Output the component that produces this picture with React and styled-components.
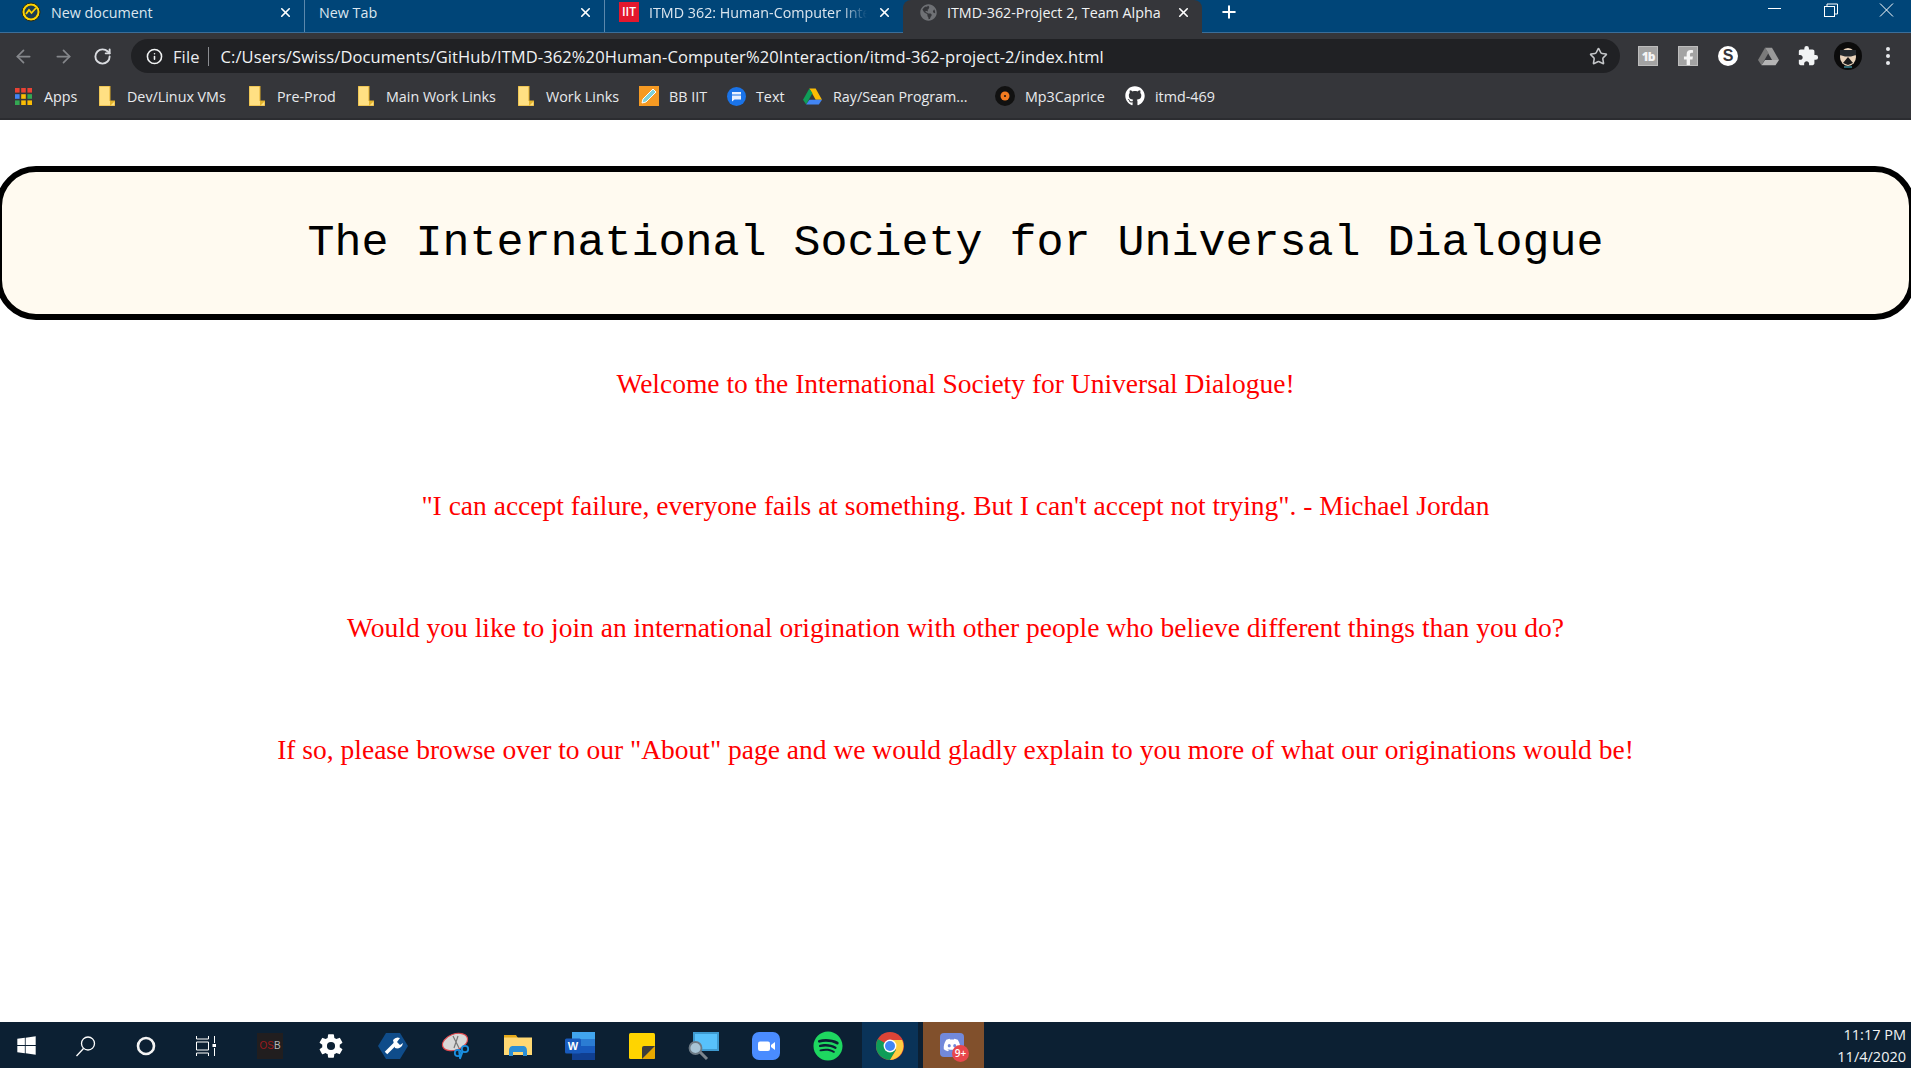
import React from "react";
import styled, { createGlobalStyle } from "styled-components";
import { ArrowLeft, ArrowRight, RotateCw, Star, Info, Plus, X } from "lucide-react";
import { FaGithub, FaSpotify, FaDiscord, FaFacebookF, FaGlobeAmericas, FaWindows } from "react-icons/fa";
import { MdExtension } from "react-icons/md";
import { IoSettingsSharp } from "react-icons/io5";

const GlobalStyle = createGlobalStyle`
  html, body {
    margin: 0;
    padding: 0;
    overflow: hidden;
    background: #fff;
  }
`;

const Page = styled.div`
  display: flex;
  flex-direction: column;
  width: 1911px;
  height: 1068px;
  overflow: hidden;
  font-family: "Open Sans", "Noto Sans", sans-serif;
`;

const TabBar = styled.div`
  display: flex;
  align-items: flex-end;
  height: 33px;
  background: #004578;
  border-bottom: 1px solid #3b6e99;
  box-sizing: border-box;
  padding-left: 5px;
  flex-shrink: 0;
`;

const Tab = styled.div`
  display: flex;
  align-items: center;
  width: ${(p) => p.$w}px;
  height: 33px;
  flex-shrink: 0;
  box-sizing: border-box;
  padding: 0 11px ${(p) => (p.$active ? 8 : 7)}px 16px;
  gap: 10px;
  color: #e6edf3;
  font-size: 14.3px;
  position: relative;
  background: ${(p) => (p.$active ? "#35363a" : "transparent")};
  border-radius: ${(p) => (p.$active ? "8px 8px 0 0" : "0")};
  margin-bottom: ${(p) => (p.$active ? "-1px" : "0")};
  border-right: ${(p) => (p.$sep ? "1px solid #5c88ac" : "none")};
  padding-left: ${(p) => p.$left || 16}px;
`;

const TabTitle = styled.span`
  flex: 1;
  white-space: nowrap;
  overflow: hidden;
  color: ${(p) => (p.$active ? "#f1f3f4" : "#dbe6ef")};
  ${(p) =>
    p.$fade &&
    "-webkit-mask-image: linear-gradient(to right, #000 88%, transparent 100%);"}
`;

const TabClose = styled(X)`
  width: 15px;
  height: 15px;
  color: #fff;
  flex-shrink: 0;
  stroke-width: 2.6;
`;

const NewTab = styled.div`
  display: flex;
  align-items: center;
  padding: 0 0 7px 17px;
  height: 33px;
  box-sizing: border-box;
  color: #fff;
`;

const WindowControls = styled.div`
  margin-left: auto;
  display: flex;
  height: 33px;
  padding-right: 15px;
  gap: 38px;
  color: #fff;
  align-items: flex-start;
  padding-top: 3px;
  box-sizing: border-box;
`;

const Toolbar = styled.div`
  display: flex;
  align-items: center;
  height: 46px;
  background: #35363a;
  padding: 0 0 0 13px;
  box-sizing: border-box;
  flex-shrink: 0;
`;

const NavButton = styled.div`
  width: 40px;
  flex-shrink: 0;
  display: flex;
  color: ${(p) => (p.$off ? "#85878b" : "#dadce0")};
`;

const AddressBar = styled.div`
  display: flex;
  align-items: center;
  width: 1489px;
  height: 34px;
  margin-left: -2px;
  background: #202124;
  border-radius: 17px;
  box-sizing: border-box;
  padding: 0 12px 0 15px;
  color: #f1f3f4;
  font-size: 16.5px;
  letter-spacing: 0.1px;
  flex-shrink: 0;
`;

const Scheme = styled.span`
  margin-left: 10px;
  padding-right: 8px;
  border-right: 1px solid #8b8d91;
  line-height: 19px;
  color: #e8eaed;
`;

const Url = styled.span`
  margin-left: 12px;
  flex: 1;
  white-space: nowrap;
`;

const ExtensionRow = styled.div`
  display: flex;
  align-items: center;
  margin-left: 8px;
`;

const ExtensionSlot = styled.div`
  width: 40px;
  height: 34px;
  display: flex;
  align-items: center;
  justify-content: center;
`;

const SquareExt = styled.div`
  width: 20px;
  height: 20px;
  background: #a3a3a3;
  border: 1px solid #bcbcbc;
  box-sizing: border-box;
  display: flex;
  align-items: center;
  justify-content: center;
  color: #f4f4f4;
  font-size: 12px;
  font-weight: 800;
  letter-spacing: -1px;
  overflow: hidden;
`;

const RoundExt = styled.div`
  width: 20px;
  height: 20px;
  border-radius: 50%;
  background: #fff;
  color: #35363a;
  font-family: "Liberation Sans", sans-serif;
  font-size: 16px;
  font-weight: 700;
  line-height: 20px;
  text-align: center;
`;

const Dots = styled.div`
  display: flex;
  flex-direction: column;
  gap: 3px;

  i {
    display: block;
    width: 4px;
    height: 4px;
    border-radius: 50%;
    background: #e8eaed;
  }
`;

const BookmarksBar = styled.div`
  display: flex;
  align-items: center;
  height: 41px;
  background: #35363a;
  border-bottom: 2px solid #2b2c30;
  box-sizing: border-box;
  padding: 0 0 5px 15px;
  flex-shrink: 0;
`;

const Bookmark = styled.div`
  display: flex;
  align-items: center;
  width: ${(p) => p.$w}px;
  flex-shrink: 0;
  gap: ${(p) => p.$gap || 12}px;
  color: #e8eaed;
  font-size: 14.3px;
  white-space: nowrap;
`;

const Folder = styled.svg`
  width: 16px;
  height: 20px;
  flex-shrink: 0;
`;

const Content = styled.main`
  flex: 1;
  min-height: 0;
  background: #fff;
  display: flex;
  flex-direction: column;
  align-items: center;
`;

const Banner = styled.h1`
  align-self: stretch;
  margin: 46px -4px 0;
  height: 154px;
  box-sizing: border-box;
  border: 6px solid #000;
  border-radius: 40px;
  background: floralwhite;
  display: flex;
  align-items: center;
  justify-content: center;
  font-family: "Liberation Mono", "Courier New", monospace;
  font-size: 45px;
  font-weight: 400;
  color: #000;
`;

const Message = styled.p`
  margin: 0;
  height: 122px;
  line-height: 122px;
  font-family: "Liberation Serif", "Times New Roman", serif;
  font-size: 27.5px;
  color: #ff0000;
  white-space: nowrap;
`;

const Messages = styled.div`
  margin-top: 3px;
  display: flex;
  flex-direction: column;
  align-items: center;
`;

const Taskbar = styled.footer`
  display: flex;
  align-items: stretch;
  height: 46px;
  flex-shrink: 0;
  background: #0c2033;
  padding-left: 2px;
  color: #fff;
`;

const TaskButton = styled.div`
  width: ${(p) => p.$w || 48}px;
  margin-right: ${(p) => p.$mr ?? 12}px;
  padding-top: 1px;
  display: flex;
  align-items: center;
  justify-content: center;
  background: ${(p) => p.$bg || "transparent"};
  position: relative;
  flex-shrink: 0;
`;

const OsbIcon = styled.div`
  width: 26px;
  height: 26px;
  background: #211e1f;
  font-family: "Liberation Sans", sans-serif;
  font-size: 10px;
  line-height: 26px;
  text-align: center;
  color: #9b1b1e;

  b {
    font-weight: 400;
    color: #b5b5b5;
  }
`;

const DiscordTile = styled.div`
  width: 24px;
  height: 24px;
  border-radius: 4px;
  background: #7289da;
  display: flex;
  align-items: center;
  justify-content: center;
  color: #fff;
  margin: 0 4px 2px 0;
`;

const Badge = styled.span`
  position: absolute;
  left: 29px;
  top: 23px;
  width: 17px;
  height: 17px;
  border-radius: 50%;
  background: #e8474c;
  color: #fff;
  font-size: 10px;
  font-weight: 600;
  line-height: 17px;
  text-align: center;
`;

const Clock = styled.div`
  margin-left: auto;
  padding: 2px 5px 0 0;
  text-align: right;
  font-size: 14.5px;
  line-height: 22px;
  color: #f1f3f4;
`;

const IitIcon = styled.span`
  width: 20px;
  height: 20px;
  background: #e4182d;
  color: #fff;
  font-size: 12px;
  font-weight: 600;
  line-height: 20px;
  text-align: center;
  flex-shrink: 0;
`;

const FolderIcon = () => (
  <Folder viewBox="0 0 16 20">
    <path d="M0 0h11v15h5v5H0z" fill="#ffe083" stroke="#e0ad2a" strokeWidth="1" />
    <path d="M11 15h5l-5 5z" fill="#e3b52f" />
  </Folder>
);

const AppsIcon = () => {
  const colors = ["#ea4335", "#ea4335", "#ea4335", "#4285f4", "#fbbc05", "#34a853", "#34a853", "#fbbc05", "#fbbc05"];
  return (
    <svg width="17" height="17" viewBox="0 0 17 17">
      {colors.map((c, i) => (
        <rect key={i} x={(i % 3) * 6.2} y={Math.floor(i / 3) * 6.2} width="4.6" height="4.6" fill={c} />
      ))}
    </svg>
  );
};

const PencilIcon = () => (
  <svg width="20" height="20" viewBox="0 0 20 20">
    <rect width="20" height="20" fill="#f59a23" />
    <path d="M4 13 14 3l3 3L7 16l-4 1z" fill="#7fd1d8" stroke="#fff" strokeWidth="1" />
  </svg>
);

const TextIcon = () => (
  <svg width="19" height="19" viewBox="0 0 19 19">
    <circle cx="9.5" cy="9.5" r="9.5" fill="#1a73e8" />
    <path d="M5 5h9v7.5H7.5L5 14.5z" fill="#e8f0fe" />
    <path d="M5 8h9" stroke="#1a73e8" strokeWidth="1" />
  </svg>
);

const DriveIcon = ({ mono, size = 19 }) => (
  <svg width={size} height={size} viewBox="0 0 24 22">
    <path d="M8 1h8l8 14h-8z" fill={mono ? "#9a9a9a" : "#fbbc04"} />
    <path d="M8 1 0 15l4 6 8-14z" fill={mono ? "#7a7a7a" : "#0f9d58"} />
    <path d="M4 21h16l4-6H8z" fill={mono ? "#b5b5b5" : "#4285f4"} />
  </svg>
);

const VinylIcon = () => (
  <svg width="20" height="20" viewBox="0 0 20 20">
    <circle cx="10" cy="10" r="10" fill="#111" />
    <circle cx="10" cy="10" r="4.5" fill="#f47b20" />
    <circle cx="10" cy="10" r="1" fill="#111" />
  </svg>
);

const BalenaIcon = () => (
  <svg width="20" height="20" viewBox="0 0 20 20">
    <circle cx="10" cy="10" r="9" fill="#ffd400" stroke="#2b2b12" strokeWidth="1" />
    <circle cx="10" cy="10" r="6.5" fill="#1d3d52" />
    <path d="M5 12l3-4 2.5 3L15 6" fill="none" stroke="#ffd400" strokeWidth="1.8" />
  </svg>
);

const AvatarIcon = () => (
  <svg width="28" height="28" viewBox="0 0 28 28">
    <circle cx="14" cy="14" r="14" fill="#0b0b0b" />
    <ellipse cx="14" cy="15" rx="8" ry="9" fill="#e9d3bb" />
    <path d="M6 8h16v5l-5 1.5h-6L6 13z" fill="#23292e" />
    <path d="M9 21l5-6 5 6-5 2z" fill="#1b1b1b" />
    <path d="M10 25h8" stroke="#4fc3d9" strokeWidth="1" />
  </svg>
);

const WinControlIcon = ({ kind }) => (
  <svg width="18" height="18" viewBox="0 0 18 18" fill="none" stroke="#fff" strokeWidth="1">
    {kind === "min" && <path d="M2 6.5h13" />}
    {kind === "max" && (
      <>
        <rect x="2.5" y="4.5" width="10" height="10" />
        <path d="M5 4.5v-2.5h10.5v10h-3" />
      </>
    )}
    {kind === "close" && <path d="M2 1.5 15 14.5M15 1.5 2 14.5" />}
  </svg>
);

const SearchGlyph = () => (
  <svg width="22" height="22" viewBox="0 0 22 22" fill="none" stroke="#fff" strokeWidth="1.3">
    <circle cx="13" cy="8.5" r="6.5" />
    <path d="M8.5 13.5 1.5 21" />
  </svg>
);

const CortanaGlyph = () => (
  <svg width="20" height="20" viewBox="0 0 20 20" fill="none" stroke="#f4f4f4" strokeWidth="2.6">
    <circle cx="10" cy="10" r="8" />
  </svg>
);

const TaskViewGlyph = () => (
  <svg width="20" height="20" viewBox="0 0 20 20" fill="none" stroke="#fff" strokeWidth="1">
    <path d="M0.5 0v3h12V0M0.5 6h12v8H0.5zM0.5 20v-3h12v3M18.5 0v7M18.5 12v8" />
    <rect x="16.5" y="8" width="3.5" height="3" fill="#fff" stroke="none" />
  </svg>
);

const WrenchHex = () => (
  <svg width="30" height="28" viewBox="0 0 30 28">
    <path d="M8 1h14l8 13-8 13H8L0 14z" fill="#0f4c8a" />
    <path d="M8 21 18 11" stroke="#fff" strokeWidth="3.5" />
    <path d="M15 8a6 6 0 0 1 7-2l-3 4 3 3 3-2a6 6 0 0 1-8 5z" fill="#fff" />
  </svg>
);

const SnipIcon = () => (
  <svg width="30" height="30" viewBox="0 0 30 30">
    <ellipse cx="14" cy="11" rx="13" ry="8" transform="rotate(-20 14 11)" fill="#d8d8d8" stroke="#e0474c" strokeWidth="1.2" />
    <path d="M12 5l6 12M17 5l-4 12" stroke="#777" strokeWidth="1.2" />
    <circle cx="17" cy="22" r="3.2" fill="none" stroke="#1a8fe0" strokeWidth="1.8" />
    <circle cx="24" cy="18" r="3.2" fill="none" stroke="#1a8fe0" strokeWidth="1.8" />
    <path d="M18 20l1 8M22 20l-3 8" stroke="#1a8fe0" strokeWidth="1.6" />
  </svg>
);

const ExplorerIcon = () => (
  <svg width="28" height="24" viewBox="0 0 28 24">
    <path d="M0 1h12l2 3h14v17H0z" fill="#e3a81a" />
    <rect y="3.5" width="28" height="17.5" fill="#ffd873" />
    <path d="M5 17c0-4 2-5 4-5h10c2 0 4 1 4 5v5h-4v-4H9v4H5z" fill="#2b8fd6" />
  </svg>
);

const WordIcon = () => (
  <svg width="30" height="28" viewBox="0 0 30 28">
    <rect x="7" width="23" height="28" rx="1.5" fill="#2b7cd3" />
    <rect x="7" width="23" height="7" fill="#41a5ee" />
    <rect x="7" y="14" width="23" height="7" fill="#185abd" />
    <rect x="7" y="21" width="23" height="7" fill="#103f91" />
    <rect y="6.5" width="16" height="15" rx="1.5" fill="#185abd" />
    <text x="8" y="18" textAnchor="middle" fontSize="11" fontWeight="700" fill="#fff" fontFamily="Liberation Sans">W</text>
  </svg>
);

const StickyIcon = () => (
  <svg width="26" height="26" viewBox="0 0 26 26">
    <rect width="26" height="26" rx="1.5" fill="#ffd400" />
    <path d="M26 13v11a2 2 0 0 1-2 2H13z" fill="#e8a800" />
    <path d="M13 26V15a2 2 0 0 1 2-2h11z" fill="#3c3c3c" />
  </svg>
);

const MagnifierIcon = () => (
  <svg width="32" height="30" viewBox="0 0 32 30">
    <rect x="5" y="1" width="26" height="19" fill="#3e9ad0" />
    <rect x="7" y="3" width="22" height="15" fill="#58c1fb" />
    <circle cx="7.5" cy="17" r="6" fill="#a7c4d6" stroke="#6d7a85" strokeWidth="1.8" />
    <path d="M12 21l7 7" stroke="#7b858e" strokeWidth="3" />
  </svg>
);

const ZoomIcon = () => (
  <svg width="28" height="28" viewBox="0 0 28 28">
    <rect width="28" height="28" rx="7" fill="#4a8cff" />
    <rect x="6" y="9.5" width="12" height="9.5" rx="2" fill="#fff" />
    <path d="M19 13l4-3v8l-4-3z" fill="#fff" />
  </svg>
);

const ChromeIcon = () => (
  <svg width="28" height="28" viewBox="0 0 28 28">
    <circle cx="14" cy="14" r="14" fill="#db4437" />
    <path d="M14 14 1.9 7A14 14 0 0 0 14 28l6-10z" fill="#0f9d58" />
    <path d="M14 8h12.1A14 14 0 0 1 14 28l6-10z" fill="#ffcd40" />
    <circle cx="14" cy="14" r="6.4" fill="#fff" />
    <circle cx="14" cy="14" r="5" fill="#4285f4" />
  </svg>
);

const tabs = [
  { title: "New document", icon: <BalenaIcon />, sep: true, left: 16, w: 300 },
  { title: "New Tab", sep: true, left: 14, w: 300 },
  { title: "ITMD 362: Human-Computer Interaction", icon: <IitIcon>IIT</IitIcon>, fade: true, left: 14, w: 298 },
  { title: "ITMD-362-Project 2, Team Alpha", icon: <FaGlobeAmericas size={17} color="#6f7175" />, active: true, left: 17, w: 299 },
];

const bookmarks = [
  { label: "Apps", w: 84, icon: <AppsIcon /> },
  { label: "Dev/Linux VMs", w: 150, icon: <FolderIcon /> },
  { label: "Pre-Prod", w: 109, icon: <FolderIcon /> },
  { label: "Main Work Links", w: 160, icon: <FolderIcon /> },
  { label: "Work Links", w: 121, icon: <FolderIcon /> },
  { label: "BB IIT", w: 88, icon: <PencilIcon />, gap: 10 },
  { label: "Text", w: 76, icon: <TextIcon />, gap: 10 },
  { label: "Ray/Sean Program...", w: 192, icon: <DriveIcon />, gap: 11 },
  { label: "Mp3Caprice", w: 130, icon: <VinylIcon />, gap: 10 },
  { label: "itmd-469", w: 100, icon: <FaGithub size={20} color="#fff" />, gap: 10 },
];

const messages = [
  "Welcome to the International Society for Universal Dialogue!",
  "\"I can accept failure, everyone fails at something. But I can't accept not trying\". - Michael Jordan",
  "Would you like to join an international origination with other people who believe different things than you do?",
  "If so, please browse over to our \"About\" page and we would gladly explain to you more of what our originations would be!",
];

export default function App() {
  return (
    <Page>
      <GlobalStyle />
      <TabBar>
        {tabs.map((t) => (
          <Tab key={t.title} $active={t.active} $sep={t.sep} $left={t.left} $w={t.w}>
            {t.icon}
            <TabTitle $active={t.active} $fade={t.fade}>{t.title}</TabTitle>
            <TabClose />
          </Tab>
        ))}
        <NewTab>
          <Plus size={20} strokeWidth={2.4} />
        </NewTab>
        <WindowControls>
          <WinControlIcon kind="min" />
          <WinControlIcon kind="max" />
          <WinControlIcon kind="close" />
        </WindowControls>
      </TabBar>

      <Toolbar>
        <NavButton $off><ArrowLeft size={21} /></NavButton>
        <NavButton $off><ArrowRight size={21} /></NavButton>
        <NavButton><RotateCw size={19} strokeWidth={2.4} /></NavButton>
        <AddressBar>
          <Info size={17} strokeWidth={2.2} />
          <Scheme>File</Scheme>
          <Url>C:/Users/Swiss/Documents/GitHub/ITMD-362%20Human-Computer%20Interaction/itmd-362-project-2/index.html</Url>
          <Star size={19} color="#c4c6c9" />
        </AddressBar>
        <ExtensionRow>
          <ExtensionSlot><SquareExt>1b</SquareExt></ExtensionSlot>
          <ExtensionSlot><SquareExt><FaFacebookF size={17} style={{ marginTop: 4 }} /></SquareExt></ExtensionSlot>
          <ExtensionSlot><RoundExt>S</RoundExt></ExtensionSlot>
          <ExtensionSlot><DriveIcon mono size={21} /></ExtensionSlot>
          <ExtensionSlot><MdExtension size={22} color="#f1f3f4" /></ExtensionSlot>
          <ExtensionSlot><AvatarIcon /></ExtensionSlot>
          <ExtensionSlot><Dots><i /><i /><i /></Dots></ExtensionSlot>
        </ExtensionRow>
      </Toolbar>

      <BookmarksBar>
        {bookmarks.map((b) => (
          <Bookmark key={b.label} $w={b.w} $gap={b.gap}>
            {b.icon}
            <span>{b.label}</span>
          </Bookmark>
        ))}
      </BookmarksBar>

      <Content>
        <Banner>The International Society for Universal Dialogue</Banner>
        <Messages>
          {messages.map((m) => (
            <Message key={m}>{m}</Message>
          ))}
        </Messages>
      </Content>

      <Taskbar>
        <TaskButton><FaWindows size={21} color="#fff" /></TaskButton>
        <TaskButton><SearchGlyph /></TaskButton>
        <TaskButton><CortanaGlyph /></TaskButton>
        <TaskButton $mr={16}><TaskViewGlyph /></TaskButton>
        <TaskButton $mr={13}><OsbIcon>OS<b>B</b></OsbIcon></TaskButton>
        <TaskButton $mr={14}><IoSettingsSharp size={26} color="#fff" /></TaskButton>
        <TaskButton $mr={15}><WrenchHex /></TaskButton>
        <TaskButton $mr={14}><SnipIcon /></TaskButton>
        <TaskButton $mr={14}><ExplorerIcon /></TaskButton>
        <TaskButton $mr={14}><WordIcon /></TaskButton>
        <TaskButton $mr={14}><StickyIcon /></TaskButton>
        <TaskButton $mr={14}><MagnifierIcon /></TaskButton>
        <TaskButton $mr={14}><ZoomIcon /></TaskButton>
        <TaskButton $mr={10}><FaSpotify size={30} color="#1ed760" /></TaskButton>
        <TaskButton $w={56} $mr={5} $bg="#0a3358"><ChromeIcon /></TaskButton>
        <TaskButton $w={61} $mr={0} $bg="#81502c">
          <DiscordTile><FaDiscord size={18} /></DiscordTile>
          <Badge>9+</Badge>
        </TaskButton>
        <Clock>
          <div>11:17 PM</div>
          <div>11/4/2020</div>
        </Clock>
      </Taskbar>
    </Page>
  );
}
